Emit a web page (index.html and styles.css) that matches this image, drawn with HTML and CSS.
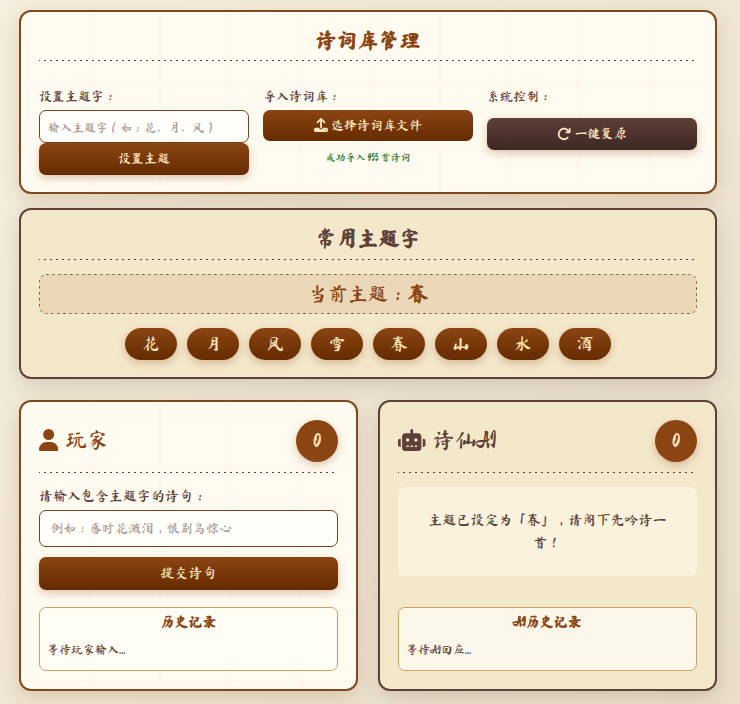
FILE: index.html
```html
<!DOCTYPE html>
<html lang="zh-CN">
<head>
<meta charset="utf-8">
<meta name="viewport" content="width=device-width, initial-scale=1">
<title>诗词飞花令</title>
<link rel="stylesheet" href="styles.css">
</head>
<body>
<main class="page">
  <section class="card card-paper">
    <h2 class="card-title dotted-rule">诗词库管理</h2>
    <div class="controls">
      <div class="control">
        <label class="label" for="theme">设置主题字：</label>
        <input class="field field-small" id="theme" type="text" placeholder="输入主题字（如：花、月、风）">
        <button class="btn" type="button">设置主题</button>
      </div>
      <div class="control">
        <span class="label">导入诗词库：</span>
        <button class="btn btn-flat" type="button">
          <svg class="btn-icon" viewBox="0 0 512 512" aria-hidden="true"><path d="M288 109.3V352c0 17.7-14.3 32-32 32s-32-14.3-32-32V109.3l-73.4 73.4c-12.5 12.5-32.8 12.5-45.3 0s-12.5-32.8 0-45.3l128-128c12.5-12.5 32.8-12.5 45.3 0l128 128c12.5 12.5 12.5 32.8 0 45.3s-32.8 12.5-45.3 0L288 109.3zM64 352H192c0 35.3 28.7 64 64 64s64-28.7 64-64H448c35.3 0 64 28.7 64 64v32c0 35.3-28.7 64-64 64H64c-35.3 0-64-28.7-64-64V416c0-35.3 28.7-64 64-64zM432 456a24 24 0 1 0 0-48 24 24 0 1 0 0 48z"/></svg>
          选择诗词库文件
        </button>
        <p class="import-status">成功导入 955 首诗词</p>
      </div>
      <div class="control">
        <span class="label">系统控制：</span>
        <button class="btn btn-dark" type="button">
          <svg class="btn-icon" viewBox="0 0 512 512" aria-hidden="true"><path d="M386.3 160H336c-17.7 0-32 14.3-32 32s14.3 32 32 32H464c17.7 0 32-14.3 32-32V64c0-17.7-14.3-32-32-32s-32 14.3-32 32v51.2L414.4 97.6c-87.5-87.5-229.3-87.5-316.8 0s-87.5 229.3 0 316.8s229.3 87.5 316.8 0c12.5-12.5 12.5-32.8 0-45.3s-32.8-12.5-45.3 0c-62.5 62.5-163.8 62.5-226.3 0s-62.5-163.8 0-226.3s163.8-62.5 226.3 0L386.3 160z"/></svg>
          一键复原
        </button>
      </div>
    </div>
  </section>

  <section class="card card-parchment">
    <h2 class="card-title dotted-rule">常用主题字</h2>
    <div class="current">
      <svg class="current-frame" aria-hidden="true"><rect class="current-outline" x="0.5" y="0.5" rx="7"/></svg>
      <p>当前主题：<strong>春</strong></p>
    </div>
    <div class="pills">
      <button class="pill" type="button">花</button>
      <button class="pill" type="button">月</button>
      <button class="pill" type="button">风</button>
      <button class="pill" type="button">雪</button>
      <button class="pill" type="button">春</button>
      <button class="pill" type="button">山</button>
      <button class="pill" type="button">水</button>
      <button class="pill" type="button">酒</button>
    </div>
  </section>

  <div class="duel">
    <section class="card card-paper side">
      <header class="side-header dotted-rule">
        <h2 class="side-name">
          <svg class="side-icon" viewBox="0 0 448 512" aria-hidden="true"><path d="M224 256A128 128 0 1 0 224 0a128 128 0 1 0 0 256zm-45.700 48C79.800 304 0 383.800 0 482.300C0 498.700 13.300 512 29.700 512H418.300c16.400 0 29.700-13.300 29.700-29.700C448 383.800 368.200 304 269.700 304H178.300z"/></svg>
          玩家
        </h2>
        <span class="score">0</span>
      </header>
      <label class="label label-large" for="verse">请输入包含主题字的诗句：</label>
      <input class="field" id="verse" type="text" placeholder="例如：感时花溅泪，恨别鸟惊心">
      <button class="btn btn-submit" type="button">提交诗句</button>
      <div class="history">
        <h3 class="history-title">历史记录</h3>
        <p class="history-text">等待玩家输入...</p>
      </div>
    </section>

    <section class="card card-parchment side">
      <header class="side-header dotted-rule">
        <h2 class="side-name">
          <svg class="side-icon" viewBox="0 0 640 512" aria-hidden="true"><path d="M320 0c17.700 0 32 14.300 32 32V96H472c39.800 0 72 32.200 72 72V440c0 39.800-32.200 72-72 72H168c-39.800 0-72-32.200-72-72V168c0-39.800 32.200-72 72-72H288V32c0-17.700 14.300-32 32-32zM208 384c-8.800 0-16 7.200-16 16s7.200 16 16 16h32c8.800 0 16-7.200 16-16s-7.200-16-16-16H208zm96 0c-8.800 0-16 7.200-16 16s7.200 16 16 16h32c8.800 0 16-7.200 16-16s-7.200-16-16-16H304zm96 0c-8.800 0-16 7.200-16 16s7.200 16 16 16h32c8.800 0 16-7.200 16-16s-7.200-16-16-16H400zM264 256a40 40 0 1 0 -80 0 40 40 0 1 0 80 0zm152 40a40 40 0 1 0 0-80 40 40 0 1 0 0 80zM48 224H64V416H48c-26.500 0-48-21.500-48-48V272c0-26.500 21.500-48 48-48zm544 0c26.500 0 48 21.500 48 48v96c0 26.500-21.500 48-48 48H576V224h16z"/></svg>
          诗仙AI
        </h2>
        <span class="score">0</span>
      </header>
      <p class="message">主题已设定为「春」，请阁下先吟诗一首！</p>
      <div class="history">
        <h3 class="history-title">AI历史记录</h3>
        <p class="history-text">等待AI回应...</p>
      </div>
    </section>
  </div>
</main>
</body>
</html>
```

FILE: styles.css
```css
:root {
  --brown: #8b4513;
  --brown-deep: #652b00;
  --umber: #5d4037;
  --umber-deep: #3e2723;
  --cream: #ffe8c0;
  --paper: #fffbf0;
  --parchment: #f4e8cb;
}

* {
  box-sizing: border-box;
}

body {
  margin: 0;
  min-height: 100vh;
  background: linear-gradient(135deg, #f5efdf, #e9dfc9);
  color: var(--umber);
  font-family: "Ma Shan Zheng", "Noto Sans CJK SC", sans-serif;
}

h2,
h3,
p {
  margin: 0;
}

button,
input {
  font-family: inherit;
}

.page {
  padding: 10px 23px 13px 19px;
}

.card {
  padding: 18px 18px 17px;
  border: 2px solid #7d4a20;
  border-radius: 12px;
  background-color: var(--paper);
  box-shadow: 0 6px 20px rgba(139, 69, 19, 0.2);
}

.card + .card {
  margin-top: 14px;
}

.card-paper {
  background-image:
    repeating-linear-gradient(90deg, transparent 0 68px, rgba(139, 69, 19, 0.02) 68px 70px),
    repeating-linear-gradient(180deg, transparent 0 68px, rgba(139, 69, 19, 0.02) 68px 70px);
}

.card-parchment {
  border-color: var(--umber);
  background-color: var(--parchment);
  box-shadow: 0 6px 20px rgba(93, 64, 55, 0.2);
}

.dotted-rule::after {
  content: "";
  grid-column: 1 / -1;
  display: block;
  height: 1px;
  background: repeating-linear-gradient(90deg, var(--umber) 0 1px, transparent 1px 5px, var(--umber) 5px 6px);
}

.card-title {
  color: var(--brown);
  font-size: 21px;
  line-height: 21px;
  text-align: center;
}

.card-title::after {
  margin-top: 9px;
}

.card-parchment .card-title {
  color: var(--umber);
  line-height: 22px;
}

.controls {
  display: grid;
  grid-template-columns: repeat(3, 1fr);
  gap: 14px;
  padding-top: 27px;
}

.control {
  display: flex;
  flex-direction: column;
}

.label {
  margin-bottom: 4px;
  font-size: 13px;
  line-height: 18px;
}

.label-large {
  margin-bottom: 5px;
  font-size: 14px;
}

.field {
  width: 100%;
  height: 37px;
  padding: 0 10px;
  border: 1px solid #714420;
  border-radius: 7px;
  background: rgba(255, 255, 255, 0.7);
  color: var(--umber);
  font-size: 13px;
}

.field-small {
  height: 33px;
  padding: 0 8px;
  font-size: 12px;
}

.field::placeholder {
  color: #a99b93;
}

.btn {
  display: flex;
  align-items: center;
  justify-content: center;
  gap: 3px;
  width: 100%;
  height: 32px;
  padding: 0 0 1px;
  border: 0;
  border-radius: 7px;
  background: linear-gradient(var(--brown), var(--brown-deep));
  box-shadow: 0 3px 9px rgba(139, 69, 19, 0.3);
  color: var(--cream);
  font-size: 13px;
}

.btn-flat {
  height: 31px;
  box-shadow: none;
}

.btn-dark {
  margin-top: 8px;
  background: linear-gradient(var(--umber), var(--umber-deep));
}

.btn-submit {
  height: 33px;
  margin-top: 10px;
  font-size: 14px;
}

.btn-icon {
  height: 14px;
  fill: currentColor;
}

.import-status {
  margin-top: 9px;
  color: #2e7d32;
  font-size: 10px;
  line-height: 14px;
  text-align: center;
}

.current {
  position: relative;
  margin-top: 14px;
  padding: 4px 5px 6px;
  border-radius: 7px;
  background: rgba(139, 69, 19, 0.1);
  color: var(--brown);
  font-size: 20px;
  line-height: 30px;
  text-align: center;
}

.current-frame {
  position: absolute;
  inset: 0;
  width: 100%;
  height: 100%;
}

.current-outline {
  width: calc(100% - 1px);
  height: calc(100% - 1px);
  fill: none;
  stroke: #714420;
  stroke-dasharray: 2 4;
}

.pills {
  display: flex;
  flex-wrap: wrap;
  justify-content: center;
  gap: 10px;
  margin-top: 14px;
}

.pill {
  width: 52px;
  height: 32px;
  padding: 0 0 1px;
  border: 0;
  border-radius: 16px;
  background: linear-gradient(var(--brown), var(--brown-deep));
  box-shadow: 0 3px 8px rgba(139, 69, 19, 0.3);
  color: var(--cream);
  font-size: 17px;
}

.duel {
  display: grid;
  grid-template-columns: 1fr 1fr;
  gap: 20px;
  margin-top: 21px;
}

.duel .card {
  margin-top: 0;
}

.side {
  display: flex;
  flex-direction: column;
  padding-bottom: 18px;
}

.side-header {
  display: grid;
  grid-template-columns: 1fr auto;
  align-items: center;
  row-gap: 10px;
  margin-bottom: 14px;
}

.side-name {
  display: flex;
  align-items: center;
  gap: 7px;
  padding-bottom: 2px;
  color: var(--brown);
  font-size: 22px;
  line-height: 28px;
  font-weight: 500;
}

.card-parchment .side-name {
  color: var(--umber);
}

.side-icon {
  height: 22px;
  fill: currentColor;
}

.score {
  display: grid;
  place-items: center;
  width: 42px;
  height: 42px;
  padding-bottom: 2px;
  border-radius: 50%;
  background: var(--brown);
  box-shadow: 0 3px 8px rgba(139, 69, 19, 0.3);
  color: var(--cream);
  font-size: 20px;
}

.message {
  display: flex;
  align-items: center;
  min-height: 89px;
  padding: 0 24px;
  border-radius: 7px;
  background: rgba(255, 252, 240, 0.5);
  font-size: 14px;
  line-height: 23px;
  text-align: center;
}

.history {
  min-height: 64px;
  margin-top: auto;
  padding: 4px 7px;
  border: 1px solid #c8a468;
  border-radius: 7px;
  background: rgba(255, 255, 245, 0.7);
}

.btn-submit + .history {
  margin-top: 17px;
}

.history-title {
  color: var(--brown);
  font-size: 14px;
  line-height: 20px;
  text-align: center;
}

.history-text {
  margin-top: 8px;
  font-size: 12px;
  line-height: 18px;
}
```
